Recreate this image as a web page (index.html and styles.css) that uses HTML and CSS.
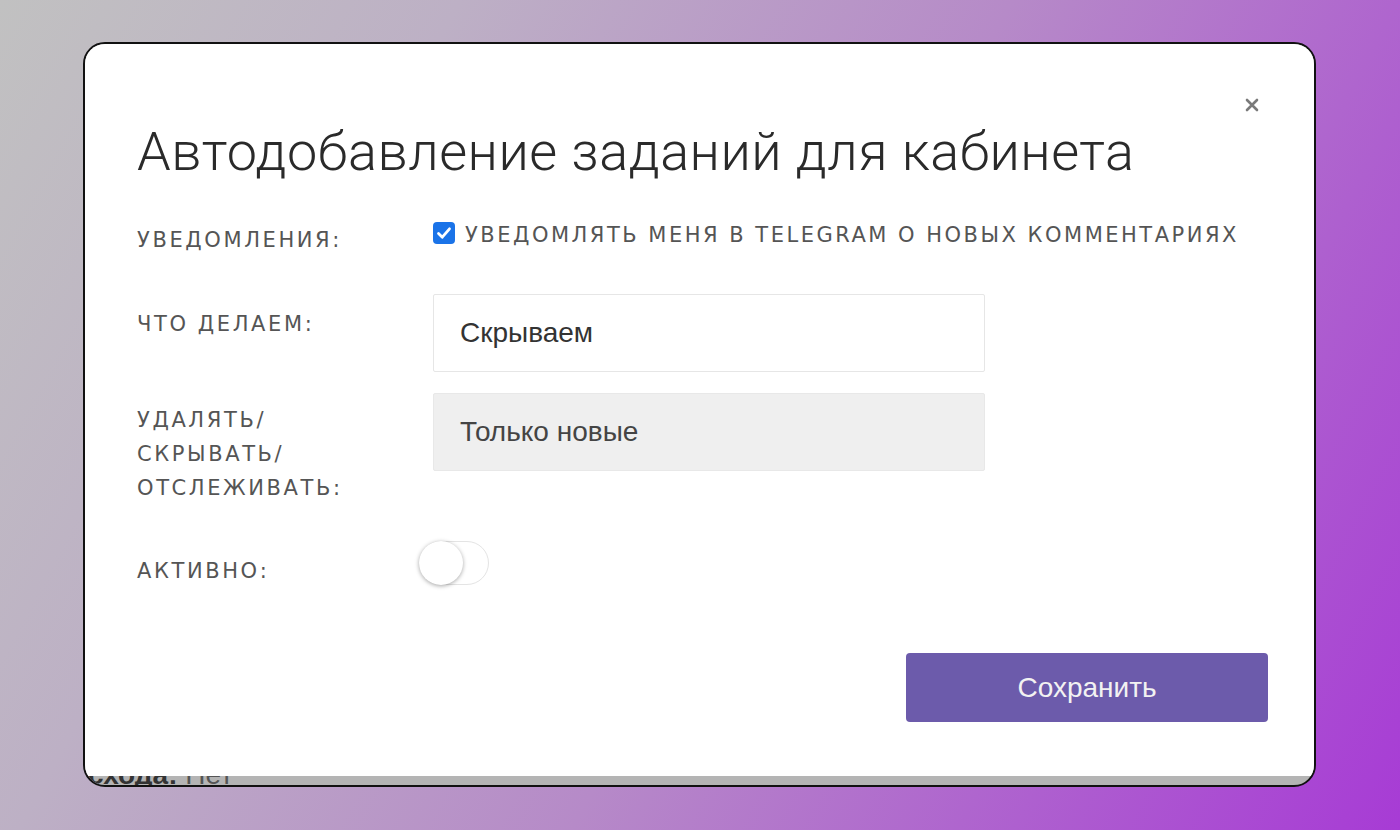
FILE: index.html
```html
<html><head><title>Автодобавление заданий</title>
<link rel="stylesheet" href="styles.css">
</head>
<body>

<div class="shot">
  <div class="modal">
    <button class="close" aria-label="Закрыть">
      <svg viewBox="0 0 14 14" width="14" height="14">
        <path d="M2 2 L12 12 M12 2 L2 12" stroke="currentColor" stroke-width="2.6" stroke-linecap="round"/>
      </svg>
    </button>

    <h1 class="title">Автодобавление заданий для кабинета</h1>

    <div class="form">
      <!-- Notifications -->
      <div class="row row-notify">
        <div class="label">Уведомления:</div>
        <label class="check">
          <span class="check-box">
            <svg viewBox="0 0 22 22" width="22" height="22">
              <path d="M5.5 11.5 L9.3 15.2 L16.5 6.8" fill="none" stroke="#fff" stroke-width="2.8" stroke-linecap="round" stroke-linejoin="round"/>
            </svg>
          </span>
          <span class="check-text">Уведомлять меня в Telegram о новых комментариях</span>
        </label>
      </div>

      <!-- Action -->
      <div class="row row-action">
        <div class="label">Что делаем:</div>
        <div class="field">Скрываем</div>
      </div>

      <!-- Scope -->
      <div class="row row-scope">
        <div class="label">Удалять/<br>скрывать/<br>отслеживать:</div>
        <div class="field field-disabled">Только новые</div>
      </div>

      <!-- Active -->
      <div class="row row-active">
        <div class="label">Активно:</div>
        <div class="toggle"><span class="knob"></span></div>
      </div>
    </div>

    <div class="footer">
      <button class="save">Сохранить</button>
    </div>
  </div>

  <div class="under">
    <div class="under-text"><b>схода:</b> Нет</div>
  </div>
</div>

</body></html>
```

FILE: styles.css
```css
:root {
  --label: #555555;
  --text: #333333;
  --field-border: #e6e6e6;
  --accent: #6c5bab;
}

body {
  margin: 0;
  padding: 0;
  height: 830px;
  overflow: hidden;
  background: linear-gradient(118deg, #c1c1c1 0%, #bdb0c5 25%, #b68ac8 55%, #a73bd5 100%);
  font-family: 'Liberation Sans', Arial, sans-serif;
}

.shot {
  box-sizing: border-box;
  width: 1233px;
  height: 745px;
  margin: 42px 0 0 83px;
  border: 2px solid #111;
  border-radius: 22px;
  overflow: hidden;
  background: #b4b4b4;
  display: flex;
  flex-direction: column;
}

.modal {
  position: relative;
  height: 732px;
  flex: none;
  background: #fff;
  padding: 78px 0 0 52px;
  box-sizing: border-box;
}

.close {
  position: absolute;
  top: 54px;
  right: 55px;
  width: 14px;
  height: 14px;
  padding: 0;
  border: none;
  background: none;
  color: #7a7a7a;
  cursor: pointer;
}

.close svg {
  display: block;
}

.title {
  margin: 0;
  font-family: Roboto, 'Noto Sans', sans-serif;
  font-weight: 300;
  font-size: 54px;
  line-height: 60px;
  color: #2a2a2a;
  letter-spacing: 0.5px;
}

.form {
  margin-top: 35px;
}

.row {
  display: grid;
  grid-template-columns: 296px 552px;
  align-items: start;
}

.label {
  font-family: 'DejaVu Sans', sans-serif;
  font-size: 21px;
  line-height: 34px;
  letter-spacing: 2.6px;
  text-transform: uppercase;
  color: var(--label);
}

.row-notify .label { padding-top: 6px; }

.check {
  display: flex;
  align-items: flex-start;
  gap: 10px;
  padding-top: 1px;
  white-space: nowrap;
}

.check-box {
  flex: none;
  width: 22px;
  height: 22px;
  margin-top: 4px;
  border-radius: 4px;
  background: #1a73e8;
}

.check-box svg {
  display: block;
}

.check-text {
  font-family: 'DejaVu Sans', sans-serif;
  font-size: 21px;
  line-height: 34px;
  letter-spacing: 2.5px;
  text-transform: uppercase;
  color: var(--label);
}

.row-action {
  margin-top: 37px;
}

.row-action .label { padding-top: 13px; }

.field {
  box-sizing: border-box;
  height: 78px;
  display: flex;
  align-items: center;
  padding-left: 26px;
  border: 1px solid var(--field-border);
  border-radius: 2px;
  background: #fff;
  font-size: 28px;
  color: var(--text);
}

.field-disabled {
  background: #efefef;
  border-color: #e8e8e8;
  color: #444;
}

.row-scope {
  margin-top: 21px;
}

.row-scope .label { padding-top: 10px; }

.row-active {
  margin-top: 36px;
}

.row-active .label { padding-top: 13px; }

.toggle {
  position: relative;
  box-sizing: border-box;
  width: 70px;
  height: 44px;
  margin-left: -14px;
  border: 1px solid #e4e4e4;
  border-radius: 22px;
  background: #fff;
}

.knob {
  position: absolute;
  left: -1px;
  top: -1px;
  width: 44px;
  height: 44px;
  border-radius: 50%;
  background: #fff;
  box-shadow: 0 1px 4px rgba(0,0,0,0.35);
}

.footer {
  display: flex;
  justify-content: flex-end;
  margin-top: 65px;
  padding-right: 46px;
}

.save {
  width: 362px;
  height: 69px;
  border: none;
  border-radius: 4px;
  background: var(--accent);
  color: #f2f2f2;
  font-family: 'Liberation Sans', Arial, sans-serif;
  font-size: 28px;
  cursor: pointer;
}

.under {
  flex: 1;
  overflow: hidden;
  padding-left: 3px;
}

.under-text {
  margin-top: -16px;
  font-size: 28px;
  line-height: 30px;
  color: #555;
}

.under-text b {
  color: #333;
}
```
